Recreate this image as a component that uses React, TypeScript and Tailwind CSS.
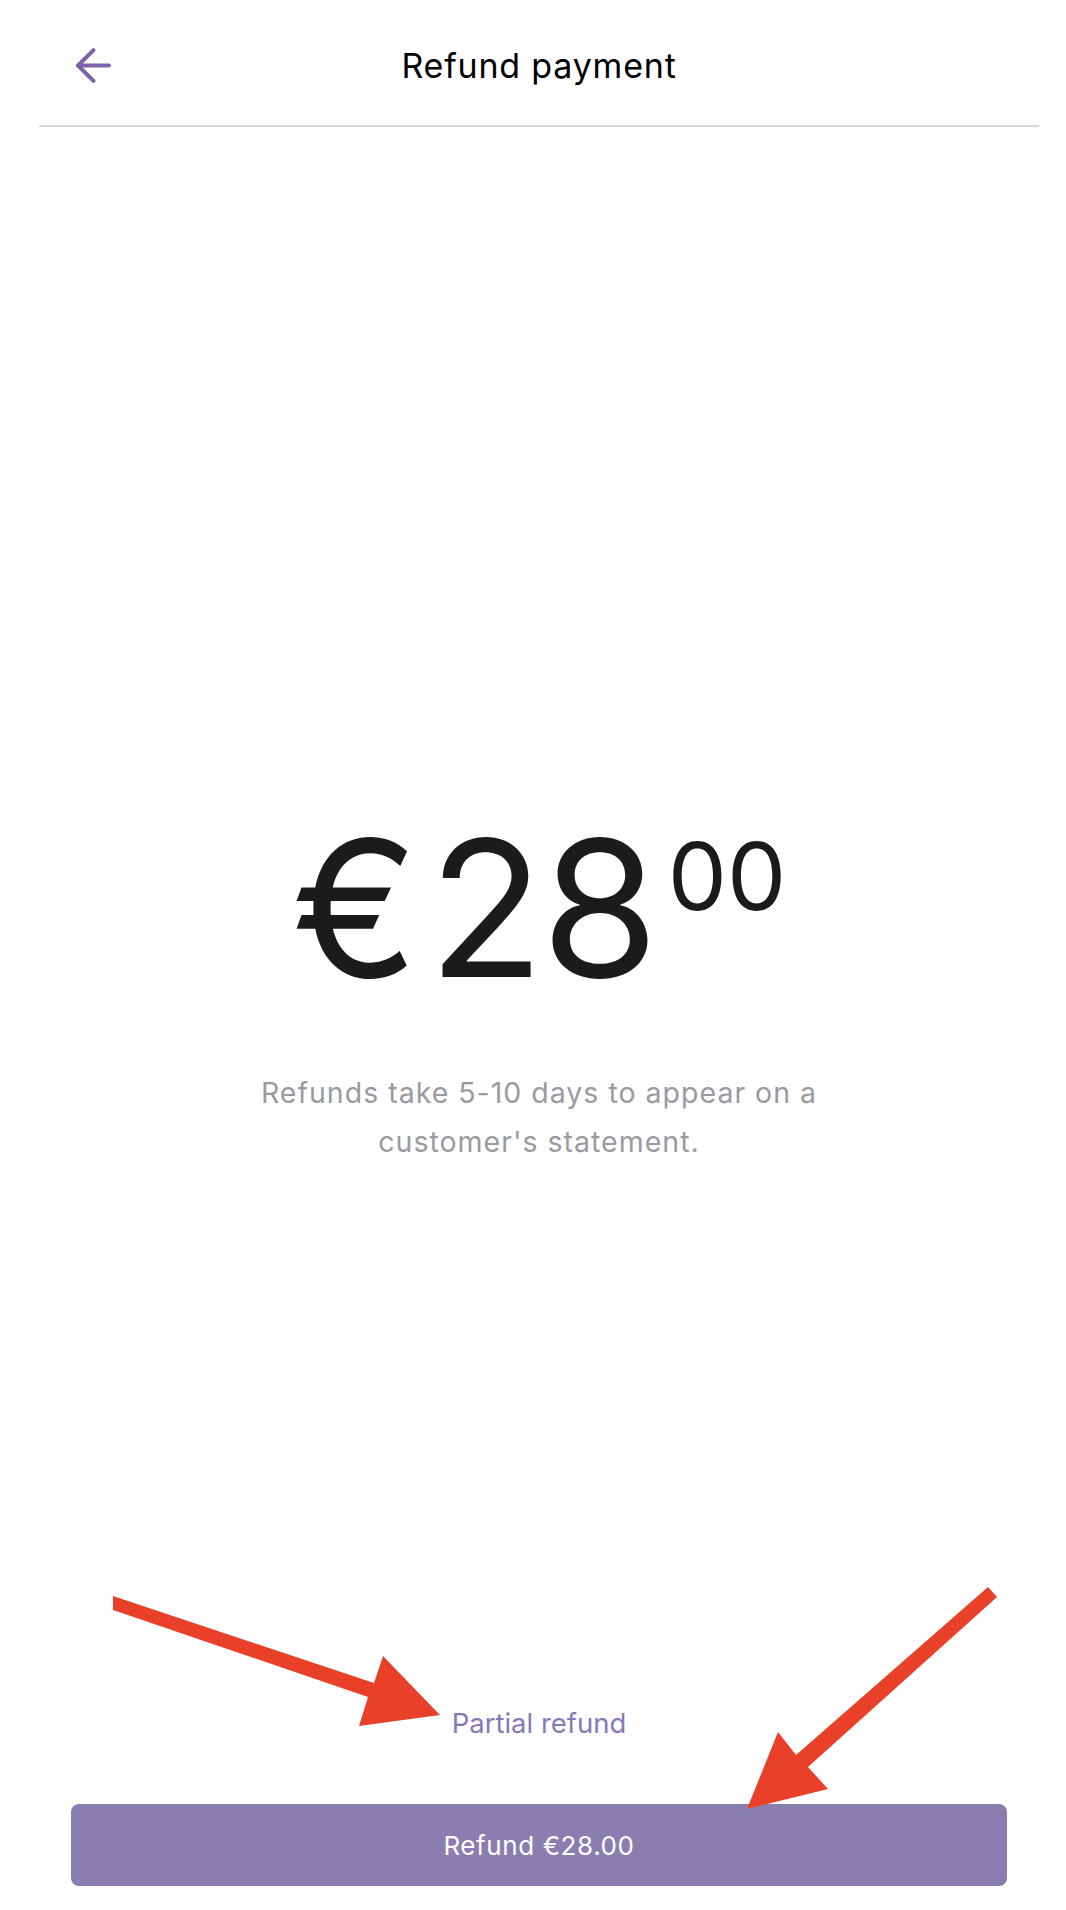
import React from "react";
import { ArrowLeft } from "lucide-react";

// Red callout arrows drawn on top of the screen
function Callouts() {
  return (
    <svg
      className="absolute inset-0 pointer-events-none"
      width="1066"
      height="1910"
      viewBox="0 0 1066 1910"
    >
      <polygon
        fill="#e9402a"
        points="113,1596 374,1683 383,1656 440,1715 359,1726 368,1697 113,1610"
      />
      <polygon
        fill="#e9402a"
        points="988,1587 997,1597 808,1767 828,1789 747,1809 778,1732 796,1755"
      />
    </svg>
  );
}

export default function App() {
  const amount = { whole: "28", cents: "00" };

  return (
    <div
      className="relative w-full h-[1910px] bg-white flex flex-col overflow-hidden"
      style={{ fontFamily: "Inter, 'Noto Sans', sans-serif" }}
    >
      <div className="flex flex-col flex-1 pl-[39px] pr-[27px]">
        {/* Header */}
        <div className="pt-[39px] mb-[33px] grid grid-cols-[1fr_auto_1fr] items-center h-[92px] content-start">
          <button className="ml-[28px] h-[53px] w-[53px] text-[#7f63a9]">
            <ArrowLeft size={53} strokeWidth={1.8} />
          </button>
          <h1 className="text-[34px] leading-[40px] font-normal text-black tracking-[0.8px]">
            Refund payment
          </h1>
          <div />
        </div>
        <div className="h-[2px] bg-[#d8d8d8]" />

        {/* Amount */}
        <div className="mt-[686px] flex justify-center items-start text-[#1b1b1b]">
          <span className="text-[190px] leading-none font-normal">€</span>
          <span className="text-[190px] leading-none font-normal ml-[10px] tracking-[-3px]">
            {amount.whole}
          </span>
          <span className="text-[94px] leading-none font-normal mt-[16px] ml-[12px]">
            {amount.cents}
          </span>
        </div>

        <p className="mt-[65px] mx-auto max-w-[620px] text-center text-[28.5px] leading-[49px] tracking-[1px] text-[#9a9aa1]">
          Refunds take 5-10 days to appear on a customer's statement.
        </p>

        {/* Actions */}
        <div className="mt-auto pb-[24px] flex flex-col items-center">
          <button className="text-[27.5px] leading-[40px] text-[#8878b8]">
            Partial refund
          </button>
          <button className="mt-[61px] self-stretch mx-[32px] h-[82px] rounded-[8px] bg-[#8a7db0] flex items-center justify-center text-white text-[26px] tracking-[0.6px]">
            Refund €28.00
          </button>
        </div>
      </div>

      <Callouts />
    </div>
  );
}
